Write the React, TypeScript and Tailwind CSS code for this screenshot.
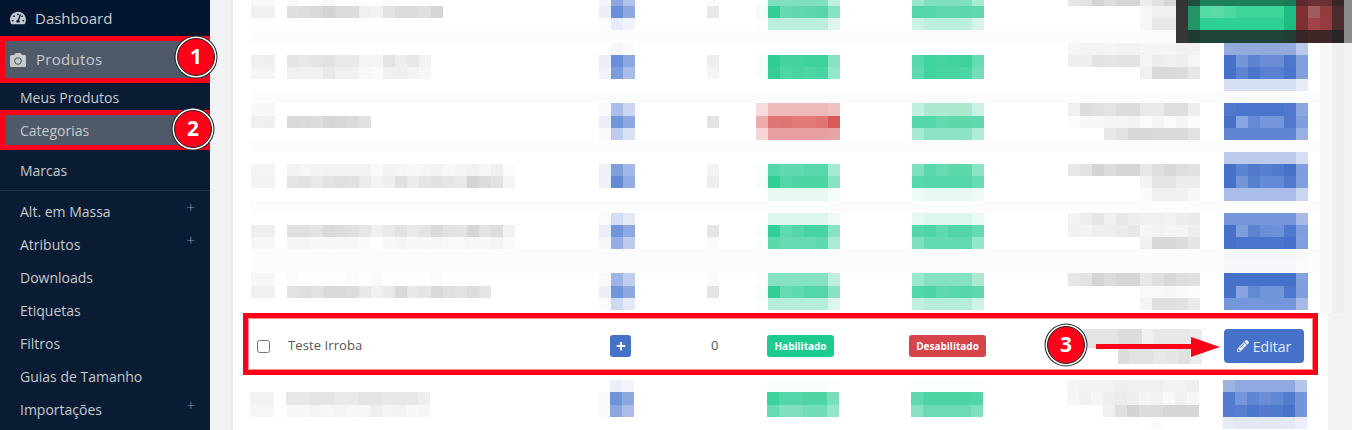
import { FaCamera, FaPencilAlt, FaPlus, FaTachometerAlt } from 'react-icons/fa';

// pixelated screenshot blocks: "." is empty, "x" repeats the last one, 2 digits are a gray
const parseLine = (line: string) => {
  let last = '';
  return line.split(' ').map((token) => {
    if (token === '.') {
      last = '';
      return '';
    }
    if (token === 'x') return last;
    last = token.length === 2 ? `#${token}${token}${token}` : `#${token}`;
    return last;
  });
};

const Mosaic = ({ lines, heights, blockWidth = 12 }: { lines: string[]; heights: number[]; blockWidth?: number }) => {
  const parsed = lines.map(parseLine);
  const cols = Math.max(...parsed.map((l) => l.length));
  const total = heights.reduce((a, b) => a + b, 0);
  let y = 0;
  return (
    <svg width={cols * blockWidth} height={total} shapeRendering="crispEdges" className="block">
      {parsed.map((line, r) => {
        const top = y;
        y += heights[r];
        return line.map((fill, c) =>
          fill ? <rect key={`${r}-${c}`} x={c * blockWidth} y={top} width={blockWidth} height={heights[r]} fill={fill} /> : null
        );
      })}
    </svg>
  );
};

interface BlurRowProps {
  heights: number[];
  cols: string[][];
  className?: string;
}

const BlurRow = ({ heights, cols, className = '' }: BlurRowProps) => (
  <div className={`grid w-[1069px] grid-cols-[36px_312px_108px_49px_156px_156px_156px_84px] ${className}`}>
    {cols.map((lines, i) => (
      <div key={i}>{lines.length > 0 && <Mosaic lines={lines} heights={heights} />}</div>
    ))}
  </div>
);

const rowZero = {
  heights: [12, 12, 12],
  cols: [
    ['f8 f8', 'f0 f0', '. .'],
    ['fa . fb fa . . . . fb . . . .', 'df dd d9 d3 dc dc f0 f2 e2 db dc e0 d5', '.'],
    ['f3f5fb 8ca6e0 b2c3ea', 'eaeefa 6a8fd8 8ea9e2', 'fafbfe e6ecf8 f0f3fb'],
    ['fa', 'e8', '.'],
    ['fafefc 7fe0bd x x x x bdf0dd', 'f4fbf8 33cd95 66d9b0 60d8ad 5dd7ab 58d5a8 85e3c2', 'fcfefd bceedd x x x x def7ee'],
    ['9ae8cb 7fe0bd x x x aaeace', '55d6a8 55d6a8 60d8ad 60d8ad 5bd7ab 60d8ad', 'cbf3e4 bdefdd x x x d5f5e9'],
    ['e6 e3 d4 de d5 d5 eb e0 d6', '. . . . . . f6 f0 f0', '. . . . . . f6 e8 e8'],
    [],
  ],
};

const rowOne = {
  heights: [12, 12, 12, 12],
  cols: [
    ['.', 'f0 ef', 'f5 f5', '.'],
    ['.', 'e6 e8 e4 e1 e9 e9 f4 f4 e4 ee e7 f2', 'f0 f1 f1 e9 f0 f0 f8 fa f0 ef f3 f6', '.'],
    ['. f5f7fb fafbfe', 'eaeefa 6a8fd8 8ea9e2', 'f0f3fb 7a9bdc a9bde8', '.'],
    ['.', 'ee', 'f4', '.'],
    ['.', 'f7fcfa 2fcd93 44d29f 44d29f 3dd29c 3dd29c 88e3c3', 'f7fcfa 33cd95 50d6a5 48d4a1 4fd6a5 48d4a1 92e8c8', '.'],
    ['.', '58d7aa 3fd39d 45d4a0 3fd39d 3dd29c 66dab0', '60d9ae 40d39d 48d4a1 48d4a1 4dd5a4 72ddb7', '.'],
    ['f6 f3 f3 f5 f2 f2 f5 f5 f5 f1 f1', 'ef ee e3 e4 e3 e3 f4 ec f0 ee f6', '. . . . . . f0 d9 d9 dc e6', '.'],
    [
      '94abdc 93aadc x x x x bac8ea',
      '4671cb 7396d8 5d84d2 6a8dd6 6a8dd6 4d77cd 80a0dd',
      '4671cb 5d84d2 4a75cd 5980d1 5980d1 4675cc 80a0dd',
      'd5e0f4 x x x x x e5ebf8',
    ],
  ],
};

const rowTwo = {
  heights: [13, 12, 12],
  cols: [
    ['f8 f8', 'f0 ef', '.'],
    ['.', 'd9 da dd d6 d8 da e1', '.'],
    ['f8f9fd abbde9 cbd6f0', 'eaeefa 7195da 8ea9e2', 'f9fafe bccbee d8e0f4'],
    ['.', 'e3', '.'],
    ['f6dede efb9b9 x x x x efc1c1', 'eeabab e07575 de7474 e27a7a e27a7a e07575 d95858', 'f5d5d5 e89f9f x x x x e8a5a5'],
    ['c0f0dd abeacf x x x c8f2e3', '55d6a8 55d6a8 62d9ae 5dd8ab 5dd8ab 60d8ad', 'a7ead2 8de4c4 x x x b0ecd6'],
    ['f0 dd e0 e4 dd dd e9 e9 de de ee', 'fb f8 f8 f4 f4 f3 fb f4 fb f5 fc', '. . . e8 e2 d8 d8 d9 d9 d9 e2'],
    ['5078cd 4a75cd x x x 5078cd 8aa7e0', '4671cb 87a5e0 658bd6 7596da 7596da 5078cd 7e9edd', '5f85d4 x x x x x 99b0e4'],
  ],
};

const rowThree = {
  heights: [12, 12, 12, 13],
  cols: [
    ['.', 'f4 f4', 'f2 f2', '.'],
    ['.', 'f2 f6 f3 f2 f3 f3 f3 f9 f3 f6 f8 f5 f3 f8 f5 f1 f6 f0 fb', 'e4 e2 e9 e3 e0 e1 ec f4 ef e1 ec e5 e1 e6 e9 d4 dc e2 f4', '.'],
    ['.', 'edf1fa 7e9fdc a2b8e8', 'edf1fa 648ad6 92ace4', '.'],
    ['.', 'f2', 'ee', '.'],
    ['.', 'f7fdfb 55d7aa 5fd9af 60d9af 58d7aa 58d7aa a5ebd2', 'f5fcf9 33cd95 55d6a8 4dd5a4 4dd5a4 4dd5a4 88e3c3', '. e8f8f3 x x x x f4fcf9'],
    ['.', '7fe0bd 58d7aa 66dab0 5dd8ab 5dd8ab 8be3c4', '58d7aa 55d6a8 x x x 66dab0', 'eefaf6 e8f8f3 x x x eefaf6'],
    ['.', 'e8 e3 d4 dc d6 d6 e8 df d8 de e1', '. . . . . . f3 e4 e4 ec ec', '. . . . . . fa f0 f0 f1 f7'],
    [
      'bccbec x x x x x d5def2',
      '4671cb 5d84d2 5078cd 5680cf 4f7bcd 4671cb 7e9edd',
      '4671cb 7396d8 5680cf 648ad6 648ad6 4f78cf 809fde',
      'a9bde8 x x x x x c9d6f0',
    ],
  ],
};

const rowFour = {
  heights: [12, 12, 12],
  cols: [
    ['.', 'ef ef', 'f6 f6'],
    ['.', 'e0 e0 e3 da dd df e6 f0 ea e2 ea e4 da e2 e4 d6 e3 dd f1', 'f5 f5 f8 f8 f7 f7 fa . f8 f5 f8 f8 f7 f9 f9 f7 f8 f3 f9'],
    ['fafbfe d2dcf3 e4e9f7', 'eaeefa 7195da 8ea9e2', 'f5f7fc 94ade4 bccbee'],
    ['.', 'e5', 'fa'],
    ['. dcf6ec x x x x eefaf6', 'f7fdfb 33cd95 5fd9af 55d6a8 48d4a1 48d4a1 88e3c3', 'fbfefd 5dd8ab 66dab0 x x 60d9ae a9ebd3'],
    ['e5f8f1 dcf6ec x x x e9f9f3', '55d6a8 4dd5a4 5fd9af 50d6a5 50d6a5 66dab0', '7fe0bd 62d9ae x x x 92e8c8'],
    ['f3 ee e6 f0 e8 ee f0 f0 f2 ec ea', 'f1 f2 ee ee ec e7 f6 f2 f5 f4 ed', '. . . . . . f0 d8 d8 dc e6'],
    ['7496da x x x x x a7bae6', '4671cb 7e9fdc 5d84d2 6a8fd6 6d92d8 4f78cf 7e9edd', '4671cb 4a75cd x x x 4570cb 809fde'],
  ],
};

const faintRow = {
  heights: [12, 12],
  cols: [[], [], [], [], [], [], [], ['f4f6fb x x x x x f9fafd', 'f5f7fc x x x x x fafbfd']],
};

const rowFive = {
  heights: [13, 12, 12],
  cols: [
    ['f7 f7', 'f0 f0', '.'],
    ['fb . fd fd fe fb . fa . . . . fb', 'e2 df e2 da da dc e7 f0 e9 d9 e8 e5 d9 e0 e2 dc e5', '.'],
    ['f6f8fc 9fb4e6 bfceee', 'eaeefa 7195da 8ea9e2', 'fafbfe cfd9f2 e4e9f7'],
    ['fa', 'e5', '.'],
    ['fbfefd 85e2c1 x x x x bff0de', 'f5fcf9 33cd95 66dab0 5fd9af 55d6a8 55d6a8 88e3c3', 'fcfefd b5eddb x x x x dcf6ec'],
    ['9ce8cc 85e2c1 x x x abeacf', '55d6a8 4dd5a4 60d8ad 58d7aa 55d6a8 60d8ad', 'c0f0dd b5eddb x x x cff3e6'],
    ['e6 e3 d4 dc d6 d6 e8 df d8 de e1', '. . . . . . f9 f9 f7 fa fc', '. . . . . . f4 e0 e0 e2 ea'],
    ['4671cb x x x x x 82a0de', '4671cb 86a3e0 6289d4 7094d8 7094d8 4d77cd 7e9edd', '7496da x x x x x a7bae6'],
  ],
};

const lastRow = {
  heights: [12, 13, 12, 12],
  cols: [
    ['.', 'f3 f3', 'f6 f6', '.'],
    ['.', 'e8 e8 e4 e4 e9 e9 e4 e4 e8 e8 e8 ee', 'f8 f8 f5 f6 f4 f7 f8 ef f4 f3 f8 f6', '.'],
    ['. ebeffa f3f5fc', 'f9fafe 6f93d9 8ba8e0', 'f9fafe 8aa6df a9bde8', '.'],
    [],
    ['. f9fdfc x x x x fcfefd', '. 3dd29c 55d6a8 55d6a8 4dd5a4 4dd5a4 78dfba', '. 66dab0 7fe0bd x 72ddb7 x 95e6c8', '.'],
    ['fafefd x x x x x', '5fd9ae 4dd5a4 x x x 55d6a8', '88e3c3 6adbb2 x x x 80e0be', '.'],
    ['f5 f2 f2 f2 ee f0 f0 f0 f2 f3 ee', 'f6 f0 f6 ee ec ef f5 f2 f9 f0 f6', '. . . f0 e0 d3 dc dc d6 d6 d6', '. . . . . . . fc . . .'],
    [
      '9db3e2 91a9e0 x x x x b3c5ea',
      '527cd0 7596da 5f85d4 6a8dd6 6089d4 527cd0 7396d8',
      '527cd0 5680cf 4a75cd 5479cd 4f7bcd 4873cb 7396d8',
      'e5ebf7 e2e8f6 x x x x eceffa',
    ],
  ],
};

const dateBlur = ['e4 e4 e4 dd dd f0 e8 e8 e8 ec', '. . . dd e2 e2 e8 e6 e0 ec'];

const overlay = [
  '333333 1f4f3c 1c8058 x x x x x x 1d7a58 5a2a2e 6b3033 x 3a2628 8c8c8c',
  '363636 229465 55dba5 5cdaa8 4ad9a0 3dd59a x x x 1cbe83 7d3033 a05c5e 933c3e 4c2a2e 8c8c8c',
  '363636 229465 2fd095 x x x x x x 1cbb80 7d3033 a14449 943c3f 4c2a2e 8c8c8c',
  '363636 1f3a30 20443a x x x x x x 203c34 352526 3f2728 x 272626 8c8c8c',
];

const SubItem = ({ label, plus }: { label: string; plus?: boolean }) => (
  <div className="relative flex h-[33px] items-center px-5 text-[14px] text-[#c6c9ce]">
    {label}
    {plus && <span className="absolute right-[15px] top-[1px] text-[15px] font-light text-[#8d96a3]">+</span>}
  </div>
);

const Badge = ({ n, className }: { n: number; className: string }) => (
  <div
    className={`absolute flex h-[38px] w-[38px] items-center justify-center rounded-full border border-[#222] bg-[#ff0019] text-[21px] font-bold text-white shadow-[0_0_0_1.5px_#fff,0_0_0_2.5px_#222] ${className}`}
  >
    {n}
  </div>
);

export default function App() {
  return (
    <div className="relative flex h-[430px] w-[1352px] overflow-hidden bg-[#f1f2f4] font-['Open_Sans',sans-serif]">
      <aside className="w-[210px] shrink-0 bg-[#0a1c33]">
        <div className="flex h-[36px] items-center bg-[#04162f] pl-[10px] text-[15px] text-[#c6c9ce]">
          <FaTachometerAlt className="mr-[9px] h-[16px] w-[16px]" />
          Dashboard
        </div>
        <div className="flex h-[47px] items-center border-[5px] border-[#ff0019] bg-[#4f5968] pl-[5px] text-[15px] tracking-[0.3px] text-[#c6c9ce]">
          <FaCamera className="mr-[10px] h-[16px] w-[16px]" />
          Produtos
        </div>
        <div className="flex h-[27px] items-center px-5 pt-[2px] text-[14px] text-[#c6c9ce]">Meus Produtos</div>
        <div className="flex h-[40px] items-center border-[5px] border-[#ff0019] bg-[#4f5968] pl-[15px] text-[14px] text-[#c6c9ce]">
          Categorias
        </div>
        <div className="flex h-[41px] items-center border-b border-[#26344b] px-5 text-[14px] text-[#c6c9ce]">Marcas</div>
        <div className="pt-[4px]">
          <SubItem label="Alt. em Massa" plus />
          <SubItem label="Atributos" plus />
          <SubItem label="Downloads" />
          <SubItem label="Etiquetas" />
          <SubItem label="Filtros" />
          <SubItem label="Guias de Tamanho" />
          <SubItem label="Importações" plus />
        </div>
      </aside>

      <main className="ml-[20px] h-[430px] w-[1098px] shrink-0 border-l-[3px] border-[#e9eaed] bg-white">
        <div className="-mt-[6px] pl-[18px]">
          <BlurRow {...rowZero} />
          <div className="h-[13px] w-[1069px] bg-[#fcfcfc]" />
          <BlurRow {...rowOne} />
          <div className="h-[12px] w-[1069px] bg-[#fcfcfc]" />
          <BlurRow {...rowTwo} />
          <div className="h-[12px] w-[1069px] bg-[#fcfcfc]" />
          <BlurRow {...rowThree} />
          <div className="h-[12px] w-[1069px] bg-[#fcfcfc]" />
          <BlurRow {...rowFour} />
          <BlurRow {...faintRow} className="bg-[#fcfcfc]" />
          <BlurRow {...rowFive} />
        </div>

        <div className="ml-[10px] mt-[3px] flex h-[62px] w-[1075px] items-center border-[5px] border-[#ff0019] pl-[9px] pt-[4px] text-[13px] text-[#555] shadow-[inset_0_0_0_1px_#ff8894]">
          <input type="checkbox" className="h-[13px] w-[13px] shrink-0" readOnly />
          <span className="ml-[18px] w-[322px] shrink-0 tracking-[0.1px]">Teste Irroba</span>
          <span className="flex h-[22px] w-[21px] shrink-0 items-center justify-center rounded-[3px] bg-[#4571c9] text-white">
            <FaPlus className="h-[10px] w-[10px]" />
          </span>
          <span className="ml-[80px] w-[56px] shrink-0">0</span>
          <span className="flex h-[22px] w-[67px] shrink-0 items-center justify-center rounded-[3px] bg-[#1ecb8e] text-[10px] font-bold text-white">
            Habilitado
          </span>
          <span className="ml-[75px] flex h-[22px] w-[77px] shrink-0 items-center justify-center rounded-[3px] bg-[#d64349] text-[10px] font-bold text-white">
            Desabilitado
          </span>
          <div className="ml-[96px] w-[142px] shrink-0">
            <Mosaic lines={dateBlur} heights={[19, 16]} />
          </div>
          <button className="flex h-[34px] w-[80px] shrink-0 items-center justify-center gap-[4px] rounded-[4px] bg-[#4571c9] text-[14px] text-[#e6ecf8]">
            <FaPencilAlt className="h-[12px] w-[12px]" />
            Editar
          </button>
        </div>

        <div className="mt-[5px] pl-[17px]">
          <BlurRow {...lastRow} />
        </div>
      </main>

      {/* blurred scrollbar edge and the blurred header corner */}
      <div className="absolute left-[1320px] top-0 h-[313px] w-[12px] bg-[#f8f8f8]" />
      <div className="absolute left-[1332px] top-0 h-[313px] w-[12px] bg-[#eeeff2]" />
      <div className="absolute left-[1176px] top-0">
        <Mosaic lines={overlay} heights={[6, 12, 12, 13]} />
      </div>

      <Badge n={1} className="left-[177px] top-[38px]" />
      <Badge n={2} className="left-[174px] top-[110px]" />
      <Badge n={3} className="left-[1047px] top-[326px]" />

      <svg className="absolute left-[1096px] top-[337px]" width="124" height="20">
        <rect x="0" y="7" width="96" height="5" fill="#ff0019" />
        <polygon points="95,0 124,10 95,20" fill="#ff0019" />
      </svg>
    </div>
  );
}
